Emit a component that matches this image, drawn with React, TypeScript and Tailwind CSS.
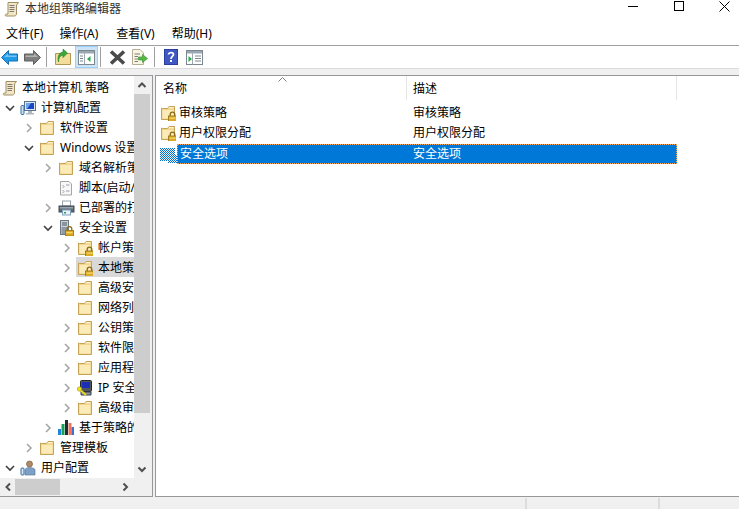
import React from "react";

const FONT = "[font-family:'Noto_Sans','Noto_Sans_CJK_SC',sans-serif]";

function Lock({ x = 8, y = 7 }: { x?: number; y?: number }) {
    return (
        <g transform={`translate(${x} ${y})`}>
            <path d="M2.2 4V2.4a2.3 2.3 0 0 1 4.6 0V4" fill="none" stroke="#8a6d1a" strokeWidth="1.3" />
            <rect x="0.5" y="4" width="8" height="5.5" fill="#dcaa24" stroke="#94700f" strokeWidth="0.8" />
            <rect x="1.5" y="5.5" width="6" height="1.2" fill="#f4d96f" />
        </g>
    );
}

function Folder({ lock }: { lock?: boolean }) {
    return (
        <svg width="16" height="16" viewBox="0 0 16 16">
            <path d="M1.5 3V14.5H14.5V1.5H9L7.5 3.5H2.5Z" fill="#f2d58a" stroke="#c4a256" />
            <path d="M2.5 5H13.5V13.5H2.5Z" fill="#fbebb8" />
            <path d="M8.8 2.7H13.5" stroke="#fff7dc" />
            {lock && <Lock />}
        </svg>
    );
}

function Scroll() {
    return (
        <svg width="16" height="16" viewBox="0 0 16 16">
            <path d="M4 1.5H14.5L12.5 4V13C12.5 14 11.5 15 10.5 15H2C1 15 0.8 13 2.5 13H4Z" fill="#f1e6c6" stroke="#a08f66" />
            <path d="M5.5 4.5H10.5M5.5 6.5H10.5M5.5 8.5H10.5M5.5 10.5H10" stroke="#5f5f5f" strokeWidth="0.8" />
        </svg>
    );
}

function Computer() {
    return (
        <svg width="17" height="16" viewBox="0 0 17 16">
            <rect x="4.5" y="1.5" width="11" height="9" fill="#dfe7f1" stroke="#5d7189" />
            <rect x="6" y="3" width="8" height="6" fill="#1b46c4" />
            <path d="M6 3h5l-4 6H6Z" fill="#6ea6ec" />
            <path d="M8 11h4v2h2v1.5H6V13h2Z" fill="#aeb7c2" />
            <rect x="1" y="5.5" width="3" height="9" rx="1" fill="#cfe0ef" stroke="#2f6ea4" />
        </svg>
    );
}

function ScriptDoc() {
    return (
        <svg width="16" height="16" viewBox="0 0 16 16">
            <path d="M2.5 1.5H11L13.5 4V15H2.5Z" fill="#f8f8f8" stroke="#a5a5a5" />
            <path d="M4.5 5L6 6.5L4.5 8M11.5 5H8M4.5 10L6 11.5L4.5 13M11.5 11H8" fill="none" stroke="#7d8794" strokeWidth="0.8" />
        </svg>
    );
}

function Printer() {
    return (
        <svg width="17" height="16" viewBox="0 0 17 16">
            <rect x="4.5" y="1" width="8" height="5" fill="#fff" stroke="#9aa3ad" />
            <rect x="1" y="6" width="15" height="6" fill="#5f6973" stroke="#454d55" />
            <rect x="2" y="7" width="13" height="1.5" fill="#9aa5b0" />
            <rect x="4.5" y="10" width="8" height="5" fill="#e9f2f8" stroke="#7fa3be" />
            <rect x="6" y="12" width="2" height="1.5" fill="#2a9a6a" />
        </svg>
    );
}

function SecurityServer() {
    return (
        <svg width="16" height="16" viewBox="0 0 16 16">
            <rect x="2.5" y="0.5" width="8" height="14" fill="#c9d2da" stroke="#6d7883" />
            <path d="M4 3H9M4 5H9" stroke="#4b5661" />
            <rect x="3.5" y="7" width="6" height="7" fill="#8f9aa5" />
            <Lock x={7} y={6.5} />
        </svg>
    );
}

function IpSecurity() {
    return (
        <svg width="16" height="16" viewBox="0 0 16 16">
            <rect x="3.5" y="0.5" width="11" height="11" rx="1" fill="#50565c" stroke="#24282c" />
            <rect x="5" y="2" width="8" height="6" fill="#1b2fb4" />
            <path d="M4 12H14V15H4Z" fill="#8c949c" stroke="#3a3f44" />
            <path d="M1 8L9 15" stroke="#e8d820" strokeWidth="2" />
            <circle cx="2.5" cy="9" r="2.2" fill="#f0e020" stroke="#a89a10" strokeWidth="0.6" />
        </svg>
    );
}

function Bars() {
    return (
        <svg width="16" height="16" viewBox="0 0 16 16">
            <rect x="0" y="9" width="3" height="6" fill="#1f86d8" />
            <rect x="3.5" y="4" width="3" height="11" fill="#18a058" />
            <rect x="7" y="0" width="3" height="15" fill="#222a33" />
            <rect x="10.5" y="3" width="3" height="12" fill="#f0745a" />
            <rect x="13.5" y="7" width="2.5" height="8" fill="#3d6fd0" />
        </svg>
    );
}

function UserConfig() {
    return (
        <svg width="17" height="16" viewBox="0 0 17 16">
            <circle cx="9.5" cy="4" r="3" fill="#b08a68" stroke="#6c5340" strokeWidth="0.6" />
            <path d="M5 15V10C5 8.5 7 7.5 9.5 7.5S15 8.5 15 10V15Z" fill="#7fa0c6" stroke="#4f6f96" strokeWidth="0.6" />
            <rect x="1" y="8" width="3" height="7" rx="1" fill="#d6e5f2" stroke="#2f6ea4" />
        </svg>
    );
}

function DitherFolder() {
    return (
        <svg width="17" height="17" viewBox="0 0 17 17" shapeRendering="crispEdges">
            <defs>
                <pattern id="dither" width="2" height="2" patternUnits="userSpaceOnUse">
                    <rect width="2" height="2" fill="#e8f2fb" />
                    <rect width="1" height="1" fill="#0a6fc8" />
                    <rect x="1" y="1" width="1" height="1" fill="#0a6fc8" />
                </pattern>
            </defs>
            <path d="M0 2H15V9H17V17H8V15H0Z" fill="url(#dither)" />
        </svg>
    );
}

function Chevron({ open }: { open?: boolean }) {
    return open ? (
        <svg width="10" height="10" viewBox="0 0 10 10">
            <path d="M1 3L5 7L9 3" fill="none" stroke="#404040" strokeWidth="1.6" />
        </svg>
    ) : (
        <svg width="10" height="10" viewBox="0 0 10 10">
            <path d="M3 1L7 5L3 9" fill="none" stroke="#a6a6a6" strokeWidth="1.6" />
        </svg>
    );
}

function ScrollArrow({ dir }: { dir: "up" | "down" | "left" | "right" }) {
    const d = {
        up: "M1.5 7L5 3.5L8.5 7",
        down: "M1.5 3.5L5 7L8.5 3.5",
        left: "M7 1.5L3.5 5L7 8.5",
        right: "M3.5 1.5L7 5L3.5 8.5",
    }[dir];
    return (
        <svg width="10" height="10" viewBox="0 0 10 10">
            <path d={d} fill="none" stroke="#505050" strokeWidth="2" />
        </svg>
    );
}

function Arrow({ color, edge, flip }: { color: string; edge: string; flip?: boolean }) {
    return (
        <svg width="17" height="15" viewBox="0 0 17 15" className={flip ? "-scale-x-100" : ""}>
            <path d="M0.5 7.5L7.5 0.5V4H16.5V11H7.5V14.5Z" fill={color} stroke={edge} />
            <path d="M3 7L7 3.5V5.5H15.5V7Z" fill="#ffffff" fillOpacity="0.4" />
        </svg>
    );
}

function UpFolder() {
    return (
        <svg width="16" height="16" viewBox="0 0 16 16">
            <path d="M0.5 4.5H15.5V15.5H0.5Z" fill="#f4dc9a" stroke="#b39755" />
            <path d="M3.5 13C3.5 9 5 6.5 8 6V8.5L12.5 4L8 0V3C4 3.5 2 8 3.5 13Z" fill="#3da83a" stroke="#27802a" strokeWidth="0.6" />
        </svg>
    );
}

function PaneIcon({ green = "left" }: { green?: "left" | "mid" }) {
    return (
        <svg width="17" height="15" viewBox="0 0 17 15">
            <rect x="0.5" y="0.5" width="16" height="14" fill="#ffffff" stroke="#7c8790" />
            <rect x="1" y="1" width="15" height="2.5" fill="#9aa6b0" />
            <path d="M6.5 3.5V14.5" stroke="#9aa6b0" />
            {green === "left" ? (
                <path d="M12.5 6V12L9 9Z" fill="#2ba84a" />
            ) : (
                <path d="M2.5 6V12L6 9Z" fill="#2ba84a" />
            )}
            {green === "left" ? (
                <path d="M2 6H5M2 8.5H5M2 11H5" stroke="#7c8790" />
            ) : (
                <path d="M9 6H15M9 8.5H15M9 11H15" stroke="#7c8790" />
            )}
        </svg>
    );
}

function DeleteX() {
    return (
        <svg width="17" height="15" viewBox="0 0 17 15">
            <path d="M2 1.5L15 13.5M15 1.5L2 13.5" stroke="#4a4a4a" strokeWidth="3.6" />
        </svg>
    );
}

function ExportList() {
    return (
        <svg width="17" height="16" viewBox="0 0 17 16">
            <path d="M1.5 0.5H9L12.5 4V15.5H1.5Z" fill="#fbf6e4" stroke="#b5ad95" />
            <path d="M3.5 5H9M3.5 7.5H7M3.5 10H7M3.5 12.5H7" stroke="#5d5d5d" strokeWidth="0.8" />
            <path d="M7.5 8H11.5V5.5L16.5 9.5L11.5 13.5V11H7.5Z" fill="#58b947" stroke="#2f8a2c" strokeWidth="0.6" />
        </svg>
    );
}

function Help() {
    return (
        <svg width="14" height="16" viewBox="0 0 14 16">
            <rect width="14" height="16" fill="#2a3f9e" />
            <rect x="1" y="1" width="12" height="14" fill="#3f58c4" />
            <path d="M4.5 5.5C4.5 3 9.5 3 9.5 5.5C9.5 7.5 7 7.5 7 10" fill="none" stroke="#ffffff" strokeWidth="1.7" />
            <rect x="6" y="11" width="2" height="2" fill="#ffffff" />
        </svg>
    );
}

function Sep() {
    return <div className="h-[20px] w-px bg-[#a0a0a0]" />;
}

type Node = { level: number; label: string; icon: React.ReactNode; open?: boolean; leaf?: boolean; active?: boolean };

const tree: Node[] = [
    { level: 0, label: "计算机配置", icon: <Computer />, open: true },
    { level: 1, label: "软件设置", icon: <Folder /> },
    { level: 1, label: "Windows 设置", icon: <Folder />, open: true },
    { level: 2, label: "域名解析策略", icon: <Folder /> },
    { level: 2, label: "脚本(启动/关机)", icon: <ScriptDoc />, leaf: true },
    { level: 2, label: "已部署的打印机", icon: <Printer /> },
    { level: 2, label: "安全设置", icon: <SecurityServer />, open: true },
    { level: 3, label: "帐户策略", icon: <Folder lock /> },
    { level: 3, label: "本地策略", icon: <Folder lock />, active: true },
    { level: 3, label: "高级安全 Windows 防火墙", icon: <Folder /> },
    { level: 3, label: "网络列表管理器策略", icon: <Folder />, leaf: true },
    { level: 3, label: "公钥策略", icon: <Folder /> },
    { level: 3, label: "软件限制策略", icon: <Folder /> },
    { level: 3, label: "应用程序控制策略", icon: <Folder /> },
    { level: 3, label: "IP 安全策略", icon: <IpSecurity /> },
    { level: 3, label: "高级审核策略配置", icon: <Folder /> },
    { level: 2, label: "基于策略的 QoS", icon: <Bars /> },
    { level: 1, label: "管理模板", icon: <Folder /> },
    { level: 0, label: "用户配置", icon: <UserConfig />, open: true },
];

const indent = ["ml-0", "ml-[19px]", "ml-[38px]", "ml-[57px]"];

function TreeRow({ node }: { node: Node }) {
    return (
        <div className="flex h-5 items-center whitespace-nowrap">
            <div className={`${indent[node.level]} flex w-[19px] shrink-0 items-center justify-center pl-px pt-px`}>
                {!node.leaf && <Chevron open={node.open} />}
            </div>
            <div className={`flex h-5 flex-1 items-center pt-px ${node.active ? "bg-[#d9d9d9]" : ""}`}>
                <div className="flex w-[22px] shrink-0 pl-px">{node.icon}</div>
                <span className="pt-px">{node.label}</span>
            </div>
        </div>
    );
}

const rows = [
    { name: "审核策略", desc: "审核策略" },
    { name: "用户权限分配", desc: "用户权限分配" },
];

export default function App() {
    return (
        <div className={`flex h-[509px] w-[739px] flex-col overflow-hidden bg-[#f0f0f0] text-[12px] text-black ${FONT}`}>
            {/* title bar */}
            <div className="flex h-[24px] items-start justify-between bg-white">
                <div className="flex items-center gap-[5px] pl-[4px]">
                    <Scroll />
                    <span className="text-[#333333]">本地组策略编辑器</span>
                </div>
                <div className="-mr-[9px] flex">
                    <div className="flex h-[12px] w-[46px] items-center justify-center">
                        <div className="h-px w-[10px] bg-black" />
                    </div>
                    <div className="flex h-[12px] w-[46px] items-center justify-center">
                        <div className="h-[10px] w-[10px] border border-black" />
                    </div>
                    <div className="flex h-[12px] w-[46px] items-center justify-center pr-[1px]">
                        <svg width="11" height="11" viewBox="0 0 11 11">
                            <path d="M0.5 0.5L10.5 10.5M10.5 0.5L0.5 10.5" stroke="#000000" />
                        </svg>
                    </div>
                </div>
            </div>

            {/* menu */}
            <div className="flex h-[22px] items-center gap-[16px] border-b border-[#a0a0a0] bg-white pb-[1px] pl-[6px]">
                <span>文件(F)</span>
                <span>操作(A)</span>
                <span className="ml-[2px]">查看(V)</span>
                <span className="ml-px">帮助(H)</span>
            </div>

            {/* toolbar */}
            <div className="flex h-[23px] items-center border-b border-[#dcdcdc] bg-white">
                <div className="ml-px flex w-[17px] justify-center"><Arrow color="#1f9be8" edge="#1470b0" /></div>
                <div className="ml-[6px] flex w-[17px] justify-center"><Arrow color="#7f7f7f" edge="#5f5f5f" flip /></div>
                <div className="ml-[5px]"><Sep /></div>
                <div className="ml-[8px]"><UpFolder /></div>
                <div className="ml-[4px] flex h-[22px] w-[23px] items-center justify-center border border-[#99d1ff] bg-[#cce4f7]">
                    <PaneIcon />
                </div>
                <div className="ml-[2px]"><Sep /></div>
                <div className="ml-[8px]"><DeleteX /></div>
                <div className="ml-[5px]"><ExportList /></div>
                <div className="ml-[6px]"><Sep /></div>
                <div className="ml-[9px]"><Help /></div>
                <div className="ml-[8px]"><PaneIcon green="mid" /></div>
            </div>

            {/* strip */}
            <div className="h-[6px] shrink-0" />

            {/* panes */}
            <div className="flex h-[422px] shrink-0">
                <div className="flex h-full w-[153px] shrink-0 flex-col border-y border-r border-[#96989c]">
                    <div className="flex min-h-0 flex-1">
                        <div className="h-[402px] w-[134px] shrink-0 overflow-hidden bg-white pt-px">
                            <div className="flex h-5 items-center whitespace-nowrap pt-px">
                                <div className="flex w-[22px] shrink-0 pl-[2px]"><Scroll /></div>
                                <span>本地计算机 策略</span>
                            </div>
                            {tree.map(node => <TreeRow key={node.label} node={node} />)}
                        </div>
                        <div className="flex w-[18px] shrink-0 flex-col">
                            <div className="flex h-[18px] w-[16px] items-center justify-center"><ScrollArrow dir="up" /></div>
                            <div className="h-[319px] w-[16px] bg-[#cdcdcd]" />
                            <div className="flex h-[65px] w-[16px] items-end justify-center pb-[4px]"><ScrollArrow dir="down" /></div>
                        </div>
                    </div>
                    <div className="flex h-[18px] shrink-0 items-center">
                        <div className="flex h-[16px] w-[15px] items-center justify-center"><ScrollArrow dir="left" /></div>
                        <div className="h-[16px] w-[45px] bg-[#cdcdcd]" />
                        <div className="flex h-[16px] w-[72px] items-center justify-end pr-[2px]"><ScrollArrow dir="right" /></div>
                    </div>
                </div>

                <div className="ml-[2px] h-full flex-1 border-y border-l border-[#96989c] bg-white">
                    <div className="relative flex h-[24px] items-center">
                        <div className="flex h-full w-[251px] items-center border-r border-[#e5e5e5] pl-[7px] pt-[2px]">名称</div>
                        <div className="flex h-full w-[270px] items-center border-r border-[#e5e5e5] pl-[6px] pt-[2px]">描述</div>
                        <svg width="9" height="5" viewBox="0 0 9 5" className="absolute left-[122px] top-[1px]">
                            <path d="M0.5 4.5L4.5 0.5L8.5 4.5" fill="none" stroke="#7f7f7f" />
                        </svg>
                    </div>
                    <div className="pt-[3px]">
                        {rows.map(r => (
                            <div key={r.name} className="flex h-5 items-center whitespace-nowrap">
                                <div className="w-[23px] shrink-0 pl-[4px]"><Folder lock /></div>
                                <div className="w-[234px] shrink-0">{r.name}</div>
                                <div>{r.desc}</div>
                            </div>
                        ))}
                        <div className="mt-px flex h-5 items-center whitespace-nowrap">
                            <div className="w-[21px] shrink-0 pl-[4px]"><DitherFolder /></div>
                            <div className="flex h-5 w-[500px] items-center border border-dotted border-[#f5a65b] bg-[#0078d7] text-white">
                                <div className="w-[235px] shrink-0 pl-[2px]">安全选项</div>
                                <div>安全选项</div>
                            </div>
                        </div>
                    </div>
                </div>
            </div>

            {/* status bar */}
            <div className="flex flex-1 pt-px">
                <div className="w-[527px] border-r-2 border-[#dcdcdc]" />
                <div className="w-[133px] border-r-2 border-[#dcdcdc]" />
            </div>
        </div>
    );
}
